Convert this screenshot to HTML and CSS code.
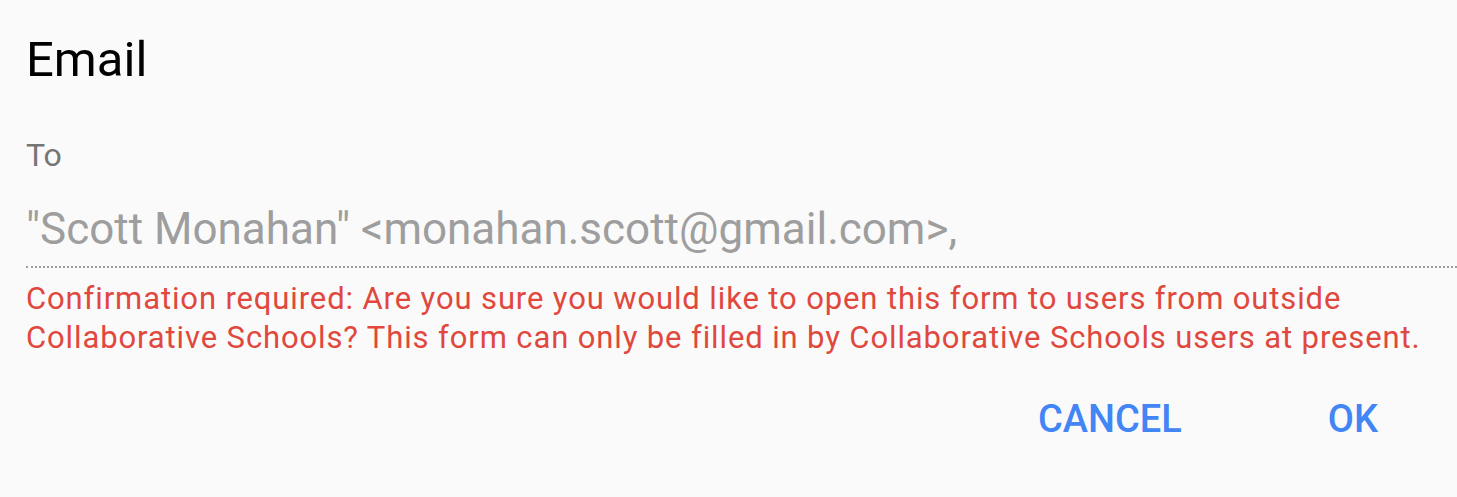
FILE: index.html
```html
<!DOCTYPE html>
<html>
<head>
<meta charset="utf-8">
<link rel="stylesheet" href="styles.css">
</head>
<body>
<div class="dialog">
  <h1 class="title">Email</h1>
  <div class="field">
    <label class="label">To</label>
    <div class="value">"Scott Monahan" &lt;monahan.scott@gmail.com&gt;,</div>
    <div class="underline"></div>
    <div class="error">Confirmation required: Are you sure you would like to open this form to users from outside Collaborative Schools? This form can only be filled in by Collaborative Schools users at present.</div>
  </div>
  <div class="actions">
    <button class="btn">CANCEL</button>
    <button class="btn">OK</button>
  </div>
</div>
</body>
</html>
```
FILE: styles.css
```css
html, body {
  margin: 0;
  padding: 0;
  background: #fafafa;
  font-family: Roboto, "Liberation Sans", sans-serif;
}
.dialog {
  width: 1457px;
  height: 497px;
  box-sizing: border-box;
  padding: 28px 0 0 26px;
}
.title {
  margin: 0;
  font-size: 49px;
  font-weight: 400;
  color: #000;
  line-height: 64px;
}
.field {
  margin-top: 45px;
}
.label {
  display: block;
  font-size: 32px;
  color: #757575;
  line-height: 36px;
}
.value {
  margin-top: 30px;
  font-size: 44px;
  color: #9e9e9e;
  line-height: 52px;
}
.underline {
  margin-top: 11px;
  height: 0;
  border-top: 2px dotted #9e9e9e;
}
.error {
  margin-top: 11px;
  font-size: 31px;
  letter-spacing: 0.88px;
  color: #e0483e;
  line-height: 39px;
  width: 1410px;
}
.actions {
  display: flex;
  justify-content: flex-end;
  padding-right: 79px;
  margin-top: 40px;
  gap: 146px;
}
.btn {
  background: none;
  border: none;
  padding: 0;
  font-family: Roboto, "Liberation Sans", sans-serif;
  font-size: 38px;
  font-weight: 500;
  color: #4285f4;
  line-height: 44px;
}
```
